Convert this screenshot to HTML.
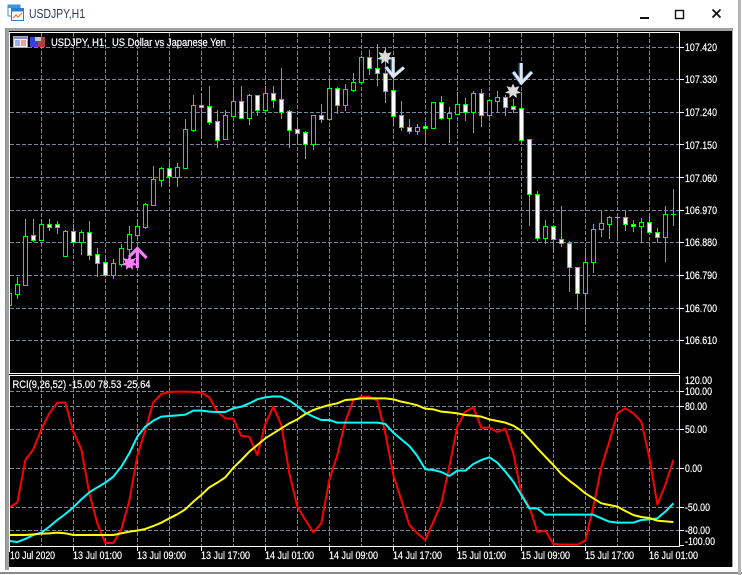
<!DOCTYPE html>
<html><head><meta charset="utf-8"><title>USDJPY,H1</title>
<style>
html,body{margin:0;padding:0;background:#fff;width:742px;height:575px;overflow:hidden}
svg{display:block}
text{font-family:"Liberation Sans",sans-serif;font-size:11px;fill:#fff;stroke:#fff;stroke-width:.2}
</style></head><body>
<svg width="742" height="575" viewBox="0 0 742 575" xmlns="http://www.w3.org/2000/svg">
<rect width="742" height="575" fill="#fff"/>
<!-- window frame -->
<rect x="5" y="28" width="728" height="542" fill="#a0a0a0"/>
<rect x="5" y="29" width="1" height="541" fill="#8c8c8c"/>
<rect x="9" y="31" width="723" height="536" fill="#000"/>
<rect x="0" y="572" width="742" height="2" fill="#8a8a8a"/>
<rect x="738" y="0" width="3" height="575" fill="#b4b4b4"/>
<rect x="5" y="567" width="728" height="3" fill="#fff"/>
<rect x="5" y="567" width="4" height="3" fill="#a0a0a0"/>
<!-- title bar -->
<rect x="8" y="5" width="12" height="11" fill="#fff" stroke="#3a96dd"/>
<rect x="8" y="5" width="12" height="3" fill="#3a96dd"/>
<rect x="11.5" y="8.5" width="12" height="12" fill="#fff" stroke="#2a7fd0"/>
<rect x="11.5" y="8.5" width="12" height="3" fill="#2a7fd0"/>
<path d="M13 18l3-3 2 2 4-4" fill="none" stroke="#e8762c" stroke-width="1.2"/>
<text x="29" y="18" textLength="56" lengthAdjust="spacingAndGlyphs" style="font-size:12.5px;fill:#2b3a55;stroke:none">USDJPY,H1</text>
<rect x="640" y="17" width="9" height="2" fill="#111"/>
<rect x="675.5" y="10.5" width="8" height="8" fill="none" stroke="#111" stroke-width="1.4"/>
<path d="M712.5 9.5l8 8M720.5 9.5l-8 8" stroke="#111" stroke-width="1.7" fill="none"/>
<!-- grid -->
<g stroke="#778899" stroke-dasharray="4 2" fill="none" shape-rendering="crispEdges">
<path d="M10 47.5H679M10 79.5H679M10 112.5H679M10 144.5H679M10 177.5H679M10 210.5H679M10 242.5H679M10 275.5H679M10 308.5H679M10 340.5H679"/>
<path d="M41.5 33V373M73.5 33V373M105.5 33V373M137.5 33V373M169.5 33V373M201.5 33V373M233.5 33V373M265.5 33V373M297.5 33V373M329.5 33V373M361.5 33V373M393.5 33V373M425.5 33V373M457.5 33V373M489.5 33V373M521.5 33V373M553.5 33V373M585.5 33V373M617.5 33V373M649.5 33V373"/>
<path d="M10 391.5H679M10 406.5H679M10 429.5H679M10 468.5H679M10 507.5H679M10 530.5H679"/>
<path d="M41.5 376V546M73.5 376V546M105.5 376V546M137.5 376V546M169.5 376V546M201.5 376V546M233.5 376V546M265.5 376V546M297.5 376V546M329.5 376V546M361.5 376V546M393.5 376V546M425.5 376V546M457.5 376V546M489.5 376V546M521.5 376V546M553.5 376V546M585.5 376V546M617.5 376V546M649.5 376V546"/>
</g>
<!-- wicks -->
<path shape-rendering="crispEdges" stroke="#00ff00" fill="none" d="M9.5 285V310M17.5 277V299M25.5 219V285M33.5 219V242M41.5 219V240M49.5 219V231M57.5 221V234M65.5 230V256M73.5 224V242M81.5 230V255M89.5 221V260M97.5 248V277M105.5 257V277M113.5 259V279M121.5 244V267M129.5 226V268M137.5 222V239M145.5 203V229M153.5 166V206M161.5 167V187M169.5 163V185M177.5 163V187M185.5 119V169M193.5 95V132M201.5 93V137M209.5 86V125M217.5 110V148M225.5 110V140M233.5 90V116M241.5 86V119M249.5 94V125M257.5 95V116M265.5 86V110M273.5 86V108M281.5 68V119M289.5 110V148M297.5 121V143M305.5 131V159M313.5 115V150M321.5 104V123M329.5 80V119M337.5 87V114M345.5 84V111M353.5 73V92M361.5 56V84M369.5 50V75M377.5 44V86M385.5 47V103M393.5 60V125M401.5 101V131M409.5 119V134M417.5 124V135M425.5 122V145M433.5 102V128M441.5 96V120M449.5 107V143M457.5 92V114M465.5 98V121M473.5 91V133M481.5 89V127M489.5 100V119M497.5 91V112M505.5 95V116M513.5 99V113M521.5 92V142M529.5 139V226M537.5 191V241M545.5 220V244M553.5 226V251M561.5 206V247M569.5 241V292M577.5 267V310M585.5 248V323M593.5 224V273M601.5 211V237M609.5 216V239M617.5 217V238M625.5 211V231M633.5 220V232M641.5 218V243M649.5 216V233M657.5 228V243M665.5 206V262M673.5 189V226M615 217.5H620M671 214.5H676"/>
<!-- hollow bodies -->
<path shape-rendering="crispEdges" stroke="#00ff00" fill="#000" d="M7.5 293.5h4v12h-4zM15.5 284.5h4v10h-4zM23.5 236.5h4v49h-4zM39.5 224.5h4v16h-4zM63.5 231.5h4v25h-4zM79.5 232.5h4v10h-4zM111.5 263.5h4v12h-4zM119.5 248.5h4v16h-4zM127.5 234.5h4v15h-4zM135.5 226.5h4v9h-4zM143.5 204.5h4v23h-4zM151.5 179.5h4v26h-4zM159.5 168.5h4v12h-4zM175.5 167.5h4v10h-4zM183.5 129.5h4v39h-4zM191.5 105.5h4v25h-4zM223.5 115.5h4v24h-4zM231.5 101.5h4v15h-4zM247.5 95.5h4v23h-4zM263.5 93.5h4v17h-4zM311.5 115.5h4v29h-4zM327.5 88.5h4v31h-4zM343.5 89.5h4v16h-4zM351.5 82.5h4v8h-4zM359.5 57.5h4v25h-4zM415.5 127.5h4v4h-4zM431.5 102.5h4v26h-4zM447.5 113.5h4v5h-4zM455.5 104.5h4v10h-4zM471.5 93.5h4v19h-4zM487.5 100.5h4v15h-4zM495.5 97.5h4v4h-4zM543.5 226.5h4v12h-4zM583.5 262.5h4v31h-4zM591.5 229.5h4v33h-4zM599.5 223.5h4v6h-4zM607.5 217.5h4v7h-4zM639.5 222.5h4v4h-4zM663.5 214.5h4v23h-4z"/>
<!-- white bodies -->
<path shape-rendering="crispEdges" stroke="#00ff00" fill="#fff" d="M31.5 235.5h4v5h-4zM47.5 224.5h4v3h-4zM55.5 224.5h4v3h-4zM71.5 231.5h4v11h-4zM87.5 232.5h4v23h-4zM95.5 254.5h4v9h-4zM103.5 262.5h4v13h-4zM167.5 168.5h4v8h-4zM199.5 105.5h4v2h-4zM207.5 106.5h4v16h-4zM215.5 121.5h4v19h-4zM239.5 101.5h4v17h-4zM255.5 95.5h4v15h-4zM271.5 93.5h4v7h-4zM279.5 99.5h4v13h-4zM287.5 111.5h4v19h-4zM295.5 129.5h4v4h-4zM303.5 132.5h4v12h-4zM319.5 115.5h4v4h-4zM335.5 88.5h4v17h-4zM367.5 57.5h4v11h-4zM375.5 68.5h4v5h-4zM383.5 73.5h4v18h-4zM391.5 90.5h4v26h-4zM399.5 115.5h4v12h-4zM407.5 127.5h4v4h-4zM423.5 126.5h4v2h-4zM439.5 102.5h4v16h-4zM463.5 104.5h4v8h-4zM479.5 93.5h4v22h-4zM503.5 97.5h4v10h-4zM511.5 106.5h4v3h-4zM519.5 108.5h4v32h-4zM527.5 139.5h4v55h-4zM535.5 194.5h4v44h-4zM551.5 226.5h4v13h-4zM559.5 239.5h4v4h-4zM567.5 243.5h4v24h-4zM575.5 267.5h4v26h-4zM623.5 217.5h4v7h-4zM631.5 224.5h4v2h-4zM647.5 222.5h4v10h-4zM655.5 232.5h4v5h-4z"/>
<!-- signals -->
<g fill="none" stroke-width="3">
<path d="M128.6 256.5L136.6 248.5 146 258M136.6 249V268" stroke="#4a50e0" transform="translate(.8 0)"/>
<path d="M129 257L137.3 248.5 146.5 258M137.3 249V268" stroke="#ff80ff"/>
<path d="M393 57V77M386 67L393.5 76.5 404 67.5" stroke="#2f5aa8" transform="translate(-1 0)"/>
<path d="M393.3 57V77M386 67L393.5 76.5 404 67.5" stroke="#dfe6ee"/>
<path d="M521 63V84M513.5 72L521.5 83 532 72" stroke="#2f5aa8" transform="translate(-1 0)"/>
<path d="M521.3 63V84M513.5 72L521.5 83 532 72" stroke="#dfe6ee"/>
</g>
<path fill="#ff80ff" d="M129.5 255l1.8 4.4 4.7-1.5-2.4 4.4 3.9 2.7-4.8.6.4 4.4-3.6-3.2-3.6 3.2.4-4.4-4.8-.6 3.9-2.7-2.4-4.4 4.7 1.5z"/>
<path fill="#dcdcdc" d="M385 49.5l1.8 4 4.7-1.4-2.4 4.4 3.9 2.5-4.6.6.3 4.4-3.7-3-3.7 3 .3-4.4-4.6-.6 3.9-2.5-2.4-4.4 4.7 1.4z"/>
<path fill="#dcdcdc" d="M513 83.5l1.8 4 4.7-1.4-2.4 4.4 3.9 2.5-4.6.6.3 4.4-3.7-3-3.7 3 .3-4.4-4.6-.6 3.9-2.5-2.4-4.4 4.7 1.4z"/>
<!-- RCI lines -->
<g transform="translate(0 370) scale(.33333)" fill="none" stroke-width="6" stroke-linejoin="round">
<polyline stroke="#ff0000" points="28,412 52,398 76,270 100,238 124,178 148,130 172,98 196,98 220,185 244,238 268,370 292,460 316,519 340,519 364,478 388,392 412,258 436,180 460,97 484,72 508,66 532,65 556,65 580,66 604,68 628,82 652,125 676,145 700,146 724,198 748,200 772,255 796,162 820,110 844,165 868,310 892,410 916,450 940,487 964,460 988,330 1012,255 1036,155 1060,90 1084,80 1108,80 1132,92 1156,190 1180,315 1204,390 1228,465 1252,490 1276,510 1300,455 1324,400 1348,290 1372,170 1396,125 1420,112 1444,173 1468,173 1492,186 1516,176 1540,250 1564,370 1588,410 1612,486 1636,482 1660,522 1684,524 1708,524 1732,524 1756,512 1780,410 1804,292 1828,215 1852,130 1876,115 1900,130 1924,155 1948,262 1972,403 1996,345 2020,270"/>
<polyline stroke="#00ffff" points="28,513 52,516 76,507 100,495 124,488 148,470 172,450 196,432 220,412 244,388 268,367 292,352 316,338 340,320 364,290 388,250 412,200 436,170 460,152 484,140 508,138 532,136 556,134 580,122 604,122 628,125 652,126 676,126 700,115 724,110 748,100 772,88 796,82 820,79 844,80 868,92 892,108 916,128 940,140 964,150 988,150 1012,158 1036,158 1060,158 1084,158 1108,158 1132,158 1156,162 1180,188 1204,208 1228,228 1252,258 1276,298 1300,300 1324,306 1348,318 1372,302 1396,302 1420,282 1444,270 1468,262 1492,278 1516,305 1540,335 1564,375 1588,415 1612,415 1636,434 1660,434 1684,434 1708,434 1732,434 1756,434 1780,434 1804,445 1828,455 1852,458 1876,458 1900,458 1924,450 1948,448 1972,445 1996,425 2020,400"/>
<polyline stroke="#ffff00" points="28,495 52,495 76,495 100,493 124,491 148,490 172,488 196,490 220,495 244,495 268,495 292,495 316,495 340,495 364,490 388,485 412,482 436,477 460,468 484,458 508,445 532,433 556,418 580,395 604,375 628,352 652,338 676,322 700,293 724,270 748,245 772,225 796,205 820,190 844,175 868,160 892,148 916,132 940,120 964,112 988,105 1012,100 1036,90 1060,88 1084,85 1108,85 1132,85 1156,85 1180,88 1204,95 1228,100 1252,106 1276,116 1300,118 1324,125 1348,127 1372,130 1396,135 1420,137 1444,140 1468,148 1492,153 1516,158 1540,167 1564,182 1588,208 1612,235 1636,260 1660,285 1684,312 1708,332 1732,350 1756,370 1780,385 1804,400 1828,405 1852,410 1876,423 1900,435 1924,441 1948,444 1972,452 1996,454 2020,456"/>
</g>
<!-- left cover and frames -->
<rect x="5" y="31" width="4" height="536" fill="#a0a0a0"/>
<rect x="5" y="31" width="1" height="536" fill="#8c8c8c"/>
<path shape-rendering="crispEdges" stroke="#fff" fill="none" d="M9.5 32.5H679.5V373.5H9.5zM9.5 375.5H679.5V546.5H9.5z"/>
<!-- ticks -->
<path shape-rendering="crispEdges" stroke="#fff" fill="none" d="M680 47.5h4M680 79.5h4M680 112.5h4M680 144.5h4M680 177.5h4M680 210.5h4M680 242.5h4M680 275.5h4M680 308.5h4M680 340.5h4M680 391.5h4M680 406.5h4M680 429.5h4M680 468.5h4M680 507.5h4M680 530.5h4M680 545.5h4M9.5 547v5M73.5 547v4M137.5 547v4M201.5 547v4M265.5 547v4M329.5 547v4M393.5 547v4M457.5 547v4M521.5 547v4M585.5 547v4M649.5 547v4"/>
<!-- price labels -->
<text x="685" y="51" textLength="32" lengthAdjust="spacingAndGlyphs">107.420</text>
<text x="685" y="83" textLength="32" lengthAdjust="spacingAndGlyphs">107.330</text>
<text x="685" y="116" textLength="32" lengthAdjust="spacingAndGlyphs">107.240</text>
<text x="685" y="149" textLength="32" lengthAdjust="spacingAndGlyphs">107.150</text>
<text x="685" y="182" textLength="32" lengthAdjust="spacingAndGlyphs">107.060</text>
<text x="685" y="214" textLength="32" lengthAdjust="spacingAndGlyphs">106.970</text>
<text x="685" y="246" textLength="32" lengthAdjust="spacingAndGlyphs">106.880</text>
<text x="685" y="279" textLength="32" lengthAdjust="spacingAndGlyphs">106.790</text>
<text x="685" y="312" textLength="32" lengthAdjust="spacingAndGlyphs">106.700</text>
<text x="685" y="344" textLength="32" lengthAdjust="spacingAndGlyphs">106.610</text>
<text x="685" y="384" textLength="27" lengthAdjust="spacingAndGlyphs">120.00</text>
<text x="685" y="395" textLength="27" lengthAdjust="spacingAndGlyphs">100.00</text>
<text x="685" y="410" textLength="22" lengthAdjust="spacingAndGlyphs">80.00</text>
<text x="685" y="433" textLength="22" lengthAdjust="spacingAndGlyphs">50.00</text>
<text x="685" y="472" textLength="17" lengthAdjust="spacingAndGlyphs">0.00</text>
<text x="685" y="511" textLength="25" lengthAdjust="spacingAndGlyphs">-50.00</text>
<text x="685" y="534" textLength="25" lengthAdjust="spacingAndGlyphs">-80.00</text>
<text x="685" y="545" textLength="30" lengthAdjust="spacingAndGlyphs">-100.00</text>
<!-- time labels -->
<text x="10" y="559" textLength="45" lengthAdjust="spacingAndGlyphs">10 Jul 2020</text>
<text x="73" y="559" textLength="49" lengthAdjust="spacingAndGlyphs">13 Jul 01:00</text>
<text x="137" y="559" textLength="49" lengthAdjust="spacingAndGlyphs">13 Jul 09:00</text>
<text x="201" y="559" textLength="49" lengthAdjust="spacingAndGlyphs">13 Jul 17:00</text>
<text x="265" y="559" textLength="49" lengthAdjust="spacingAndGlyphs">14 Jul 01:00</text>
<text x="329" y="559" textLength="49" lengthAdjust="spacingAndGlyphs">14 Jul 09:00</text>
<text x="393" y="559" textLength="49" lengthAdjust="spacingAndGlyphs">14 Jul 17:00</text>
<text x="457" y="559" textLength="49" lengthAdjust="spacingAndGlyphs">15 Jul 01:00</text>
<text x="521" y="559" textLength="49" lengthAdjust="spacingAndGlyphs">15 Jul 09:00</text>
<text x="585" y="559" textLength="49" lengthAdjust="spacingAndGlyphs">15 Jul 17:00</text>
<text x="649" y="559" textLength="49" lengthAdjust="spacingAndGlyphs">16 Jul 01:00</text>
<!-- legends -->
<rect x="13.5" y="36.5" width="14" height="11" fill="#f4f4f4" stroke="#a8a8c8"/>
<rect x="14" y="37" width="13" height="2" fill="#8888cc"/>
<path d="M15 41h5M15 43h5M15 45h5" stroke="#5060d0" fill="none"/>
<path d="M21 41h5M21 43h5M21 45h5" stroke="#d05050" fill="none"/>
<rect x="30" y="37" width="8" height="10" fill="#3a3ee0"/>
<rect x="38" y="37" width="7" height="10" fill="#b83a3a"/>
<rect x="35" y="37" width="6" height="4" fill="#c8c8c8"/>
<text x="51" y="46" textLength="175" lengthAdjust="spacingAndGlyphs" xml:space="preserve">USDJPY, H1:  US Dollar vs Japanese Yen</text>
<text x="12.5" y="388" textLength="138" lengthAdjust="spacingAndGlyphs">RCI(9,26,52) -15.00 78.53 -25.64</text>
</svg>
</body></html>
